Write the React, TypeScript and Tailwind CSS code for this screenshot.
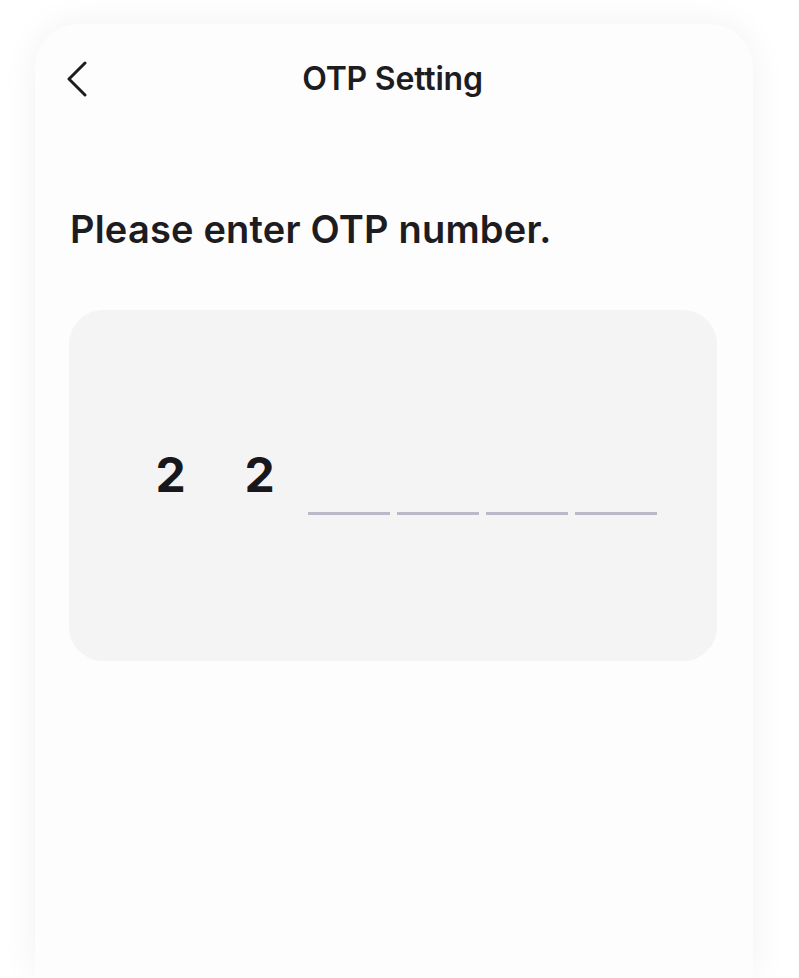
export default function App() {
  const digits = ["2", "2", "", "", "", ""];

  return (
    <div
      className="min-h-screen bg-white overflow-hidden"
      style={{ fontFamily: "Inter, 'Noto Sans', sans-serif" }}
    >
      <div className="ml-[35px] mt-[24px] w-[718px] min-h-[954px] rounded-t-[44px] bg-[#fdfdfd] shadow-[0_0_36px_rgba(0,0,0,0.06)] pt-[27px]">
        {/* header */}
        <div className="relative h-[56px] flex items-center justify-center">
          <button className="absolute left-[28px] top-[9px] w-[28px] h-[38px] flex items-center justify-center">
            <svg width="24" height="36" viewBox="0 0 24 36" fill="none">
              <path
                d="M20 2 L4 18 L20 34"
                stroke="#1c1c21"
                strokeWidth="3"
                strokeLinecap="round"
                strokeLinejoin="round"
              />
            </svg>
          </button>
          <h1 className="text-[32px] leading-[40px] font-semibold text-[#1c1c21] tracking-[-0.2px] -ml-[3px]">
            OTP Setting
          </h1>
        </div>

        <h2 className="mt-[99px] px-[35px] text-[38px] leading-[46px] font-semibold text-[#1c1c21] tracking-[0.2px]">
          Please enter OTP number.
        </h2>

        <div className="ml-[34px] mr-[36px] mt-[58px] h-[351px] rounded-[34px] bg-[#f4f4f4] pt-[141px]">
          <div className="flex justify-center gap-[7px]">
            {digits.map((d, i) => (
              <div
                key={i}
                className={
                  d
                    ? "w-[82px] h-[64px] flex justify-center"
                    : "w-[82px] h-[64px] border-b-[3px] border-[#bab9ca]"
                }
              >
                {d && (
                  <span className="text-[48px] leading-[48px] font-bold text-[#18181c]">
                    {d}
                  </span>
                )}
              </div>
            ))}
          </div>
        </div>
      </div>
    </div>
  );
}
